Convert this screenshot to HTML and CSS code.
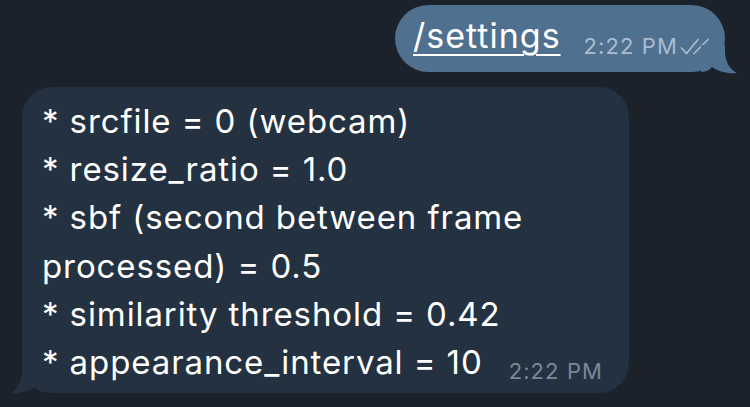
FILE: index.html
```html
<!DOCTYPE html>
<html>
<head>
<meta charset="utf-8">
<link rel="stylesheet" href="styles.css">
</head>
<body>
<div class="chat">
  <div class="row row-out">
    <div class="bubble bubble-out">
      <span class="cmd">/settings</span>
      <span class="meta meta-out">2:22 PM<svg class="checks" width="30" height="17" viewBox="0 0 30 17"><path d="M1.5 10 L6.5 15.5 L18 1.5 M14 15.5 L28 1.5" fill="none" stroke="#a9bdd3" stroke-width="1.7" stroke-linecap="round" stroke-linejoin="round"/></svg></span>
      <svg class="tail tail-out" width="36" height="30" viewBox="0 0 36 30"><path d="M0 0 L24 0 L24 6 C24 18 30 25 36 28 C28 29 18 27 11 22 C9 24 6 27 0 27 Z" fill="#50708f"/></svg>
    </div>
  </div>
  <div class="row row-in">
    <div class="bubble bubble-in">
      <div class="line">* srcfile = 0 (webcam)</div>
      <div class="line">* resize_ratio = 1.0</div>
      <div class="line">* sbf (second between frame processed) = 0.5</div>
      <div class="line">* similarity threshold = 0.42</div>
      <div class="line">* appearance_interval = 10<span class="meta meta-in">2:22 PM</span></div>
      <svg class="tail tail-in" width="36" height="30" viewBox="0 0 36 30"><path d="M36 0 L12 0 L12 6 C12 18 6 25 0 28 C8 29 18 27 25 22 C27 24 30 27 36 27 Z" fill="#243140"/></svg>
    </div>
  </div>
</div>
</body>
</html>
```

FILE: styles.css
```css
html, body {
  margin: 0;
  padding: 0;
  background: #1c222b;
  height: 100%;
}
body {
  font-family: Inter, "Open Sans", sans-serif;
  color: #ffffff;
  overflow: hidden;
}
.chat {
  display: flex;
  flex-direction: column;
  gap: 15px;
  padding: 5px 25px 0 22px;
}
.row {
  display: flex;
}
.row-out {
  justify-content: flex-end;
}
.bubble {
  position: relative;
}
.bubble-out {
  background: #50708f;
  border-radius: 34px;
  height: 67px;
  box-sizing: border-box;
  padding: 0 15px 0 18px;
  display: flex;
  align-items: baseline;
  line-height: 67px;
}
.cmd {
  font-size: 34px;
  letter-spacing: 1px;
  text-decoration: underline;
  text-decoration-thickness: 2px;
  text-underline-offset: 6px;
  position: relative;
  top: -3px;
}
.meta {
  font-size: 22px;
  letter-spacing: 1.1px;
  white-space: nowrap;
}
.meta-out {
  color: #a9bdd3;
  margin-left: 23px;
  position: relative;
  top: 3px;
}
.checks {
  vertical-align: -1px;
  margin-left: 2px;
}
.bubble-in {
  background: #243140;
  border-radius: 30px;
  width: 607px;
  box-sizing: border-box;
  padding: 10px 20px 7px 20px;
  font-size: 33px;
  letter-spacing: 0.9px;
  line-height: 48.2px;
}
.meta-in {
  color: #7b8898;
  margin-left: 26px;
  line-height: 20px;
  vertical-align: -5px;
}
.tail {
  position: absolute;
  bottom: -3px;
}
.tail-out {
  right: -12px;
}
.tail-in {
  left: -12px;
  bottom: -2px;
}
```
